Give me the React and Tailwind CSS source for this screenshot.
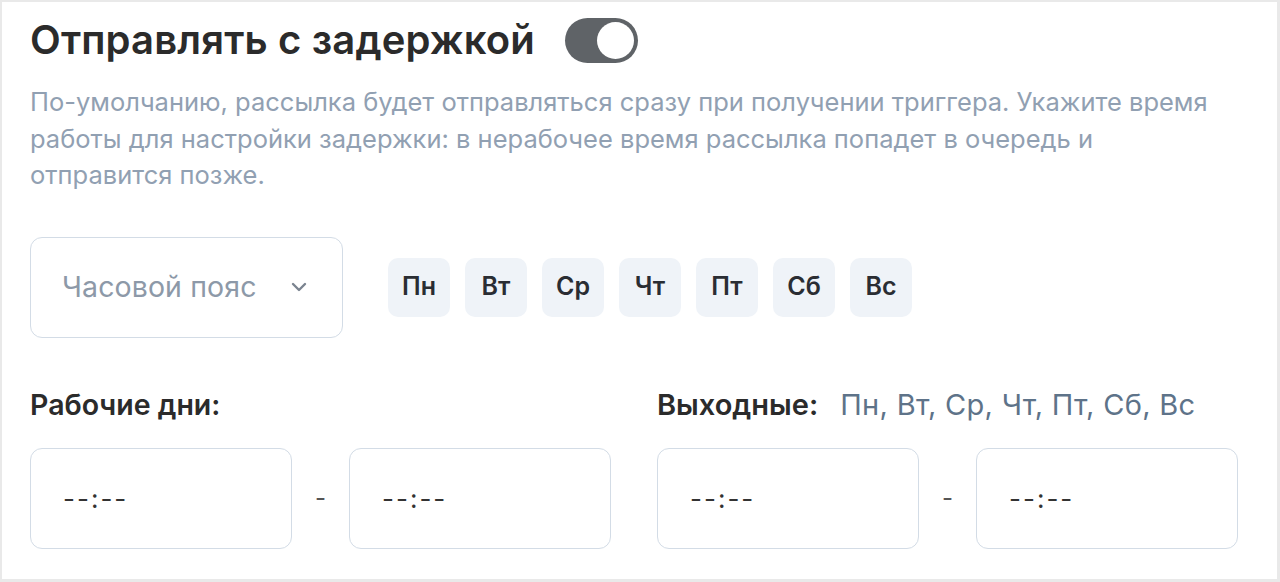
import React from "react";

const days = ["Пн", "Вт", "Ср", "Чт", "Пт", "Сб", "Вс"];

function TimeInput() {
  return (
    <div className="h-[101px] w-[262px] rounded-[12px] border border-[#d3dce6] bg-white flex items-center pl-[32px] text-[26px] text-[#333] tracking-[2px]">
      --:--
    </div>
  );
}

function TimeRange() {
  return (
    <div className="flex items-center">
      <TimeInput />
      <div className="w-[57px] text-center text-[24px] text-[#555]">-</div>
      <TimeInput />
    </div>
  );
}

export default function App() {
  return (
    <div className="h-[582px] w-[1280px] bg-[#e9e9e9] pt-[2px] pl-[2px] pr-[3px] pb-[3px] font-['Inter',sans-serif]">
      <div className="h-full bg-white pl-[28px] pt-[15px]">
        <div className="flex items-center gap-[30px] h-[46px]">
          <h2 className="text-[40px] font-semibold text-[#2b2b2b] leading-none tracking-[0.15px]">
            Отправлять с задержкой
          </h2>
          <div className="relative h-[45px] w-[73px] rounded-full bg-[#5f6367]">
            <div className="absolute right-[4px] top-[4px] h-[37px] w-[37px] rounded-full bg-white" />
          </div>
        </div>

        <p className="mt-[21px] w-[1200px] text-[25.5px] leading-[36.5px] text-[#91a0b2]">
          По-умолчанию, рассылка будет отправляться сразу при получении триггера. Укажите время
          работы для настройки задержки: в нерабочее время рассылка попадет в очередь и
          отправится позже.
        </p>

        <div className="mt-[43px] flex items-center">
          <div className="h-[101px] w-[313px] rounded-[12px] border border-[#d3dce6] flex items-center justify-between pl-[31px] pr-[34px]">
            <span className="text-[28.5px] text-[#8d99a8] tracking-[0.1px]">Часовой пояс</span>
            <svg width="18" height="12" viewBox="0 0 18 12" fill="none">
              <path d="M3 3l6 6 6-6" stroke="#7b8490" strokeWidth="2.4" strokeLinecap="round" strokeLinejoin="round" />
            </svg>
          </div>
          <div className="ml-[45px] flex gap-[15px]">
            {days.map((d) => (
              <div
                key={d}
                className="h-[59px] w-[62px] rounded-[10px] bg-[#eff3f8] flex items-center justify-center text-[25px] font-semibold text-[#2a2d33]"
              >
                {d}
              </div>
            ))}
          </div>
        </div>

        <div className="mt-[51px] grid grid-cols-[581px_581px] gap-x-[46px]">
          <div className="text-[28.5px] font-semibold text-[#2b2b2b] leading-[32px]">Рабочие дни:</div>
          <div className="text-[29px] leading-[32px] flex gap-[22px]">
            <span className="font-semibold text-[#2b2b2b]">Выходные:</span>
            <span className="text-[#5e7389] tracking-[0.3px]">Пн, Вт, Ср, Чт, Пт, Сб, Вс</span>
          </div>
          <div className="mt-[27px]">
            <TimeRange />
          </div>
          <div className="mt-[27px]">
            <TimeRange />
          </div>
        </div>
      </div>
    </div>
  );
}
